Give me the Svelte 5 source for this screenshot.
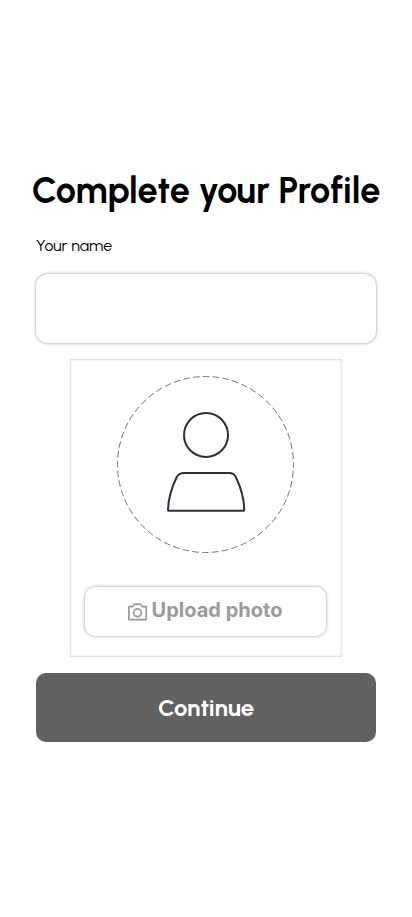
<script>
  let name = $state('');
</script>

<main>
  <h1>Complete your Profile</h1>
  <label for="name">Your name</label>
  <input id="name" type="text" bind:value={name} />

  <section class="photo">
    <svg class="avatar" width="178" height="178" viewBox="0 0 178 178" fill="none">
      <circle cx="89.5" cy="88.5" r="88" stroke="#747474" stroke-width="1" stroke-dasharray="6.6 3.273" stroke-dashoffset="3.3" />
      <g stroke="#2f2e3c" stroke-width="2" stroke-linejoin="round">
        <circle cx="90" cy="59" r="22" />
        <path d="M68.2 97H113.2Q117.7 97 119.7 100.8Q128 118 128.3 134Q128.3 134.8 127.7 134.8H52.7Q52 134.8 52 134Q52.4 118 60.9 100.8Q63.2 97 68.2 97Z" />
      </g>
    </svg>
    <button class="upload" type="button">
      <svg width="20" height="18" viewBox="0 0 20 18" fill="none" stroke="#9b9b9b" stroke-width="1.7" stroke-linejoin="round">
        <path d="M0.9 3.6H4.7L6.6 1.2H12.4L14.3 3.6H18.2V16.6H0.9Z" />
        <circle cx="9.5" cy="9.8" r="3.9" />
      </svg>
      <span>Upload photo</span>
    </button>
  </section>

  <button class="continue" type="button">Continue</button>
</main>

<style>
  :global(body) {
    background: #fff;
  }
  main {
    box-sizing: border-box;
    width: 412px;
    height: 917px;
    padding: 169px 36px 0;
    display: flex;
    flex-direction: column;
    align-items: center;
    overflow: hidden;
    font-family: Urbanist, Lato, 'Liberation Sans', sans-serif;
    color: #000;
  }
  h1 {
    margin: 0;
    height: 44px;
    font-size: 36px;
    line-height: 44px;
    font-weight: 700;
    white-space: nowrap;
  }
  label {
    align-self: flex-start;
    margin-top: 23px;
    height: 20px;
    font-size: 16px;
    line-height: 20px;
    letter-spacing: 0.05px;
  }
  input {
    box-sizing: border-box;
    width: 340px;
    height: 69px;
    margin-top: 18px;
    padding: 0 16px;
    border: 0;
    border-radius: 12px;
    background: #fff;
    box-shadow: 0 0 3.5px rgba(0, 0, 0, 0.42);
    font: inherit;
    outline: none;
  }
  .photo {
    box-sizing: border-box;
    width: 272px;
    height: 298px;
    margin-top: 16px;
    padding: 17px 2px 0 0;
    display: flex;
    flex-direction: column;
    align-items: center;
    box-shadow: inset 0 0 3px rgba(0, 0, 0, 0.27);
  }
  .avatar {
    display: block;
    overflow: visible;
  }
  .upload {
    box-sizing: border-box;
    width: 241px;
    height: 49px;
    margin-top: 33px;
    padding: 0;
    display: flex;
    align-items: center;
    justify-content: center;
    gap: 4px;
    border: 0;
    border-radius: 10px;
    background: #fff;
    box-shadow: 0 0 3.5px rgba(0, 0, 0, 0.42);
    color: #9b9b9b;
    font: 700 20px/24px Inter, sans-serif;
  }
  .upload svg {
    margin-top: 1px;
  }
  .upload span {
    margin-top: -3px;
  }
  .continue {
    width: 340px;
    height: 69px;
    margin-top: 16px;
    padding: 0;
    border: 0;
    border-radius: 10px;
    background: #626061;
    color: #fff;
    font: 700 24px/29px Urbanist, Lato, 'Liberation Sans', sans-serif;
  }
</style>
